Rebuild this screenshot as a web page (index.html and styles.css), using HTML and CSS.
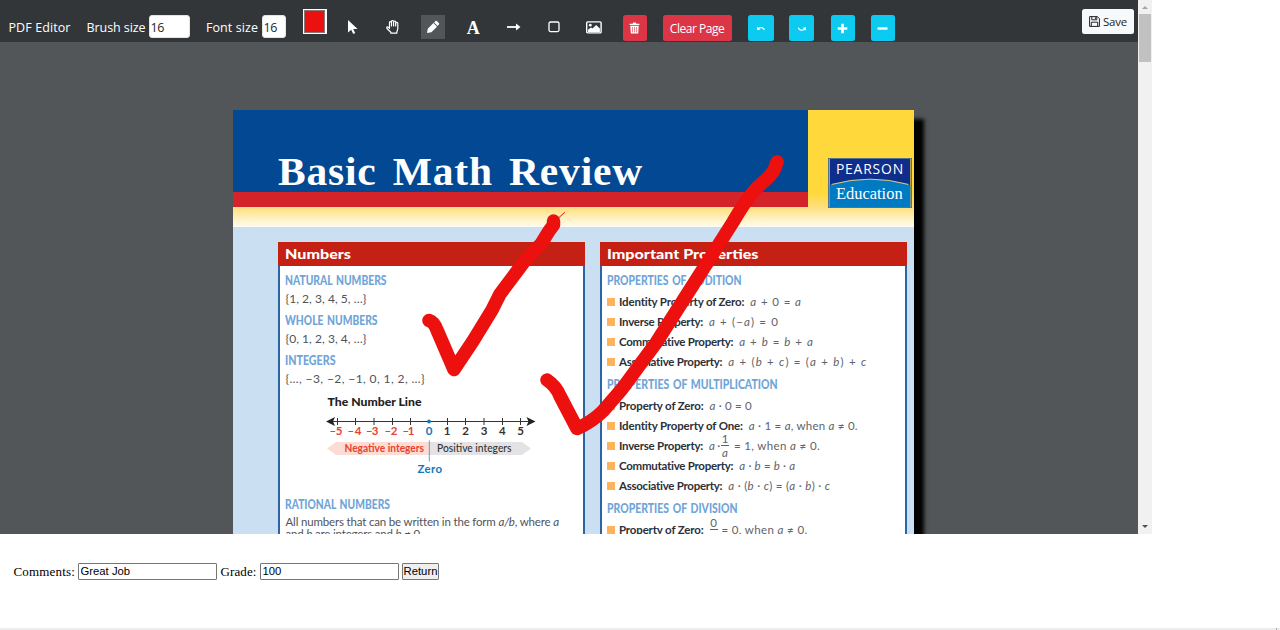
FILE: index.html
```html
<!DOCTYPE html>
<html lang="en">
<head>
<meta charset="utf-8">
<title>PDF Editor</title>
<link rel="stylesheet" href="styles.css">
</head>
<body>
<div class="editor">
  <div class="editor-main">
    <header class="toolbar">
      <span class="brand" data-w="62">PDF Editor</span>
      <label class="brush-label" data-w="59">Brush size</label><span class="num num-brush">16</span>
      <label class="font-label" data-w="52">Font size</label><span class="num num-font">16</span>
      <span class="swatch"></span>
      <div class="tools">
        <span class="tool"><svg width="12" height="16" viewBox="0 0 12 16"><path d="M1 1v12.500l3.200-2.800 2 4.300 2-.9-2-4.200H10.600z" fill="#fff"/></svg></span>
        <span class="tool"><svg width="16" height="16" viewBox="0 0 16 16" fill="none" stroke="#fff" stroke-width="1.2" stroke-linejoin="round" stroke-linecap="round"><path d="M4.500 9V3.500c0-1.200 2-1.200 2 0V7M6.500 7V2.400c0-1.200 2.100-1.200 2.100 0V7M8.600 7V2.900c0-1.200 2.100-1.200 2.100 0V7M10.700 7V4.300c0-1.200 2.100-1.200 2.100 0V9c0 2-.5 2.800-1 4v1.200H5.800v-1L2 9.500c-.9-1.200.5-2.200 1.500-1.200l1 1"/></svg></span>
        <span class="tool active"><svg width="14" height="14" viewBox="0 0 14 14"><path d="M1 13l.8-4.300 5.600-5.600 3.600 3.600-5.600 5.500zM8.100 2.400l1.400-1.300q.7-.6 1.400 0l2 2q.6.7 0 1.400l-1.300 1.400z" fill="#fff"/></svg></span>
        <span class="tool letter">A</span>
        <span class="tool"><svg width="16" height="10" viewBox="0 0 16 10"><path d="M1 5h10" stroke="#fff" stroke-width="1.800"/><path d="M10 1.500L14.500 5 10 8.500z" fill="#fff"/></svg></span>
        <span class="tool"><svg width="12" height="12" viewBox="0 0 12 12"><rect x="1" y="1" width="10" height="9.600" rx="1.500" fill="none" stroke="#fff" stroke-width="1.300"/></svg></span>
        <span class="tool"><svg width="16" height="13" viewBox="0 0 16 13"><rect x=".7" y=".9" width="14.400" height="11" rx="1" fill="none" stroke="#fff" stroke-width="1.400"/><circle cx="4.300" cy="4.200" r="1.400" fill="#fff"/><path d="M2 11V8.800L5 6.500l1.500 1L10.100 3.900l3.800 3.600V11z" fill="#fff"/></svg></span>
      </div>
      <span class="btn danger trash"><svg width="11" height="12" viewBox="0 0 11 12"><path d="M.6 1.800h3L4.300.6h2.400l.7 1.200h3v1.300H.6zM1.300 3.800h8.400l-.5 7.700H1.800z" fill="#fff"/><path d="M3.500 5v5.300M5.500 5v5.300M7.500 5v5.300" stroke="#dc3545" stroke-width=".6"/></svg></span>
      <span class="btn danger clear"><span data-w="54.500">Clear Page</span></span>
      <span class="btn info undo"><svg width="10" height="8" viewBox="0 0 10 8"><path d="M2 4.600C4 3 7.500 3 8.500 6" fill="none" stroke="#fff" stroke-width="1.200"/><path d="M.8 2.800l.5 3.500 3.100-.7z" fill="#fff"/></svg></span>
      <span class="btn info redo"><svg width="10" height="8" viewBox="0 0 10 8"><path d="M1.300 3.700C2 6.700 5.500 6.700 7.800 5.200" fill="none" stroke="#fff" stroke-width="1.200"/><path d="M9 6.500l-.3-3.500-3.100.9z" fill="#fff"/></svg></span>
      <span class="btn info plus"><svg width="11" height="11" viewBox="0 0 11 11"><path d="M5.500.7v9.600M.7 5.500h9.600" stroke="#fff" stroke-width="2.700"/></svg></span>
      <span class="btn info minus"><svg width="11" height="11" viewBox="0 0 11 11"><path d="M.5 5.500h10" stroke="#fff" stroke-width="2.400"/></svg></span>
      <span class="save"><svg width="11" height="11" viewBox="0 0 11 11" fill="none" stroke="#212529" stroke-width="1"><path d="M.6.6h7.800l2 2v7.800H.6zM2.800.6v3.200h5V.6M2.300 10.400V6.200h6.400v4.200"/><path d="M6.400 1.300v1.700"/></svg><span data-w="24">Save</span></span>
    </header>
    <main class="viewer">
      <div class="page">
        <div class="banner">
          <div class="banner-title"><h1><span class="wide" data-w="365">Basic Math Review</span></h1></div>
          <div class="banner-side">
            <svg class="logo" width="84" height="50" viewBox="0 0 84 50">
              <rect width="84" height="50" fill="#0f2d8a"/>
              <path d="M0 27Q42 15 84 27V50H0z" fill="#007ac3"/>
              <path d="M2 26.500Q42 15.500 82 26.500" fill="none" stroke="#e8d67a"/>
              <text class="logo-top" x="6.500" y="15.500" textLength="70">PEARSON</text>
              <text class="logo-bottom" x="6.500" y="42" textLength="69.500" lengthAdjust="spacingAndGlyphs">Education</text>
            </svg>
          </div>
        </div>
        <div class="columns">
          <section class="panel">
            <h2><span class="wide" data-w="66">Numbers</span></h2>
            <h3><span class="wide" data-w="101.500">NATURAL NUMBERS</span></h3>
            <p class="set"><span data-w="81">{1, 2, 3, 4, 5, …}</span></p>
            <h3><span class="wide" data-w="92.500">WHOLE NUMBERS</span></h3>
            <p class="set"><span data-w="81">{0, 1, 2, 3, 4, …}</span></p>
            <h3><span class="wide" data-w="50.500">INTEGERS</span></h3>
            <p class="set"><span data-w="139.500">{…, −3, −2, −1, 0, 1, 2, …}</span></p>
            <svg class="number-line" width="300" height="104" viewBox="280 392 300 104">
              <text x="327.500" y="405.800" class="nl-title" textLength="94" lengthAdjust="spacingAndGlyphs">The Number Line</text>
              <path d="M333 421.500H529" stroke="#333" stroke-width="1"/>
              <path d="M326 421.500l9-4.500-2 4.500 2 4.500zM535.500 421.500l-9-4.500 2 4.500-2 4.500z" fill="#222"/>
              <path d="M337.500 418v7M355.500 418v7M374 418v7M392.500 418v7M410.500 418v7M447.500 418v7M465.500 418v7M484 418v7M502.500 418v7M520.500 418v7" stroke="#333"/>
              <circle cx="429" cy="421.500" r="1.900" fill="#1477bd"/>
              <path d="M327 448.500l9-6.500H429v13H336z" fill="#fddcd3"/>
              <path d="M531 448.500l-9-6.500H429v13H522z" fill="#e3e3e6"/>
              <path d="M429.300 440.500v21" stroke="#5b9fd0"/>
              <g class="nl-neg"><text x="329.500" y="435.300" textLength="13">–5</text><text x="347.500" y="435.300" textLength="14">–4</text><text x="366" y="435.300" textLength="12.500">–3</text><text x="384.500" y="435.300" textLength="13">–2</text><text x="402.500" y="435.300" textLength="12">–1</text></g>
              <g class="nl-pos"><text x="429" y="435.300" class="nl-zero">0</text><text x="447" y="435.300">1</text><text x="465.500" y="435.300">2</text><text x="484" y="435.300">3</text><text x="502.300" y="435.300">4</text><text x="520.500" y="435.300">5</text></g>
              <text x="344.500" y="452" class="nl-left" textLength="79.500" lengthAdjust="spacingAndGlyphs">Negative integers</text>
              <text x="437" y="452" class="nl-right" textLength="74.500" lengthAdjust="spacingAndGlyphs">Positive integers</text>
              <text x="417.500" y="473.300" class="nl-bottom" textLength="24.500">Zero</text>
            </svg>
            <h3><span class="wide" data-w="105">RATIONAL NUMBERS</span></h3>
            <p class="prose"><span data-w="273">All numbers that can be written in the form <i>a/b</i>, where <i>a</i></span></p>
            <p class="prose"><span data-w="137">and <i>b</i> are integers and <i>b</i> ≠ 0.</span></p>
          </section>
          <section class="panel">
            <h2><span class="wide" data-w="151.500">Important Properties</span></h2>
            <h3><span class="wide" data-w="134.500">PROPERTIES OF ADDITION</span></h3>
            <ul>
              <li><b data-w="125.500">Identity Property of Zero:</b><span data-w="51.500"><i>a</i> + 0 = <i>a</i></span></li>
              <li><b data-w="84">Inverse Property:</b><span data-w="70"><i>a</i> + (−<i>a</i>) = 0</span></li>
              <li><b data-w="114.500">Commutative Property:</b><span data-w="74.500"><i>a</i> + <i>b</i> = <i>b</i> + <i>a</i></span></li>
              <li><b data-w="103.500">Associative Property:</b><span data-w="139"><i>a</i> + (<i>b</i> + <i>c</i>) = (<i>a</i> + <i>b</i>) + <i>c</i></span></li>
            </ul>
            <h3><span class="wide" data-w="170.500">PROPERTIES OF MULTIPLICATION</span></h3>
            <ul>
              <li><b data-w="84.500">Property of Zero:</b><span data-w="42.500"><i>a</i> · 0 = 0</span></li>
              <li><b data-w="124">Identity Property of One:</b><span data-w="109"><i>a</i> · 1 = <i>a</i>, when <i>a</i> ≠ 0.</span></li>
              <li><b data-w="84">Inverse Property:</b><span data-w="11"><i>a</i> ·</span><span class="frac"><span>1</span><i>a</i></span><span data-w="86">= 1, when <i>a</i> ≠ 0.</span></li>
              <li><b data-w="114.500">Commutative Property:</b><span data-w="56"><i>a</i> · <i>b</i> = <i>b</i> · <i>a</i></span></li>
              <li><b data-w="103.500">Associative Property:</b><span data-w="102"><i>a</i> · (<i>b</i> · <i>c</i>) = (<i>a</i> · <i>b</i>) · <i>c</i></span></li>
            </ul>
            <h3><span class="wide" data-w="130.500">PROPERTIES OF DIVISION</span></h3>
            <ul>
              <li><b data-w="84.500">Property of Zero:</b><span class="frac first"><span>0</span><i>a</i></span><span data-w="86">= 0, when <i>a</i> ≠ 0.</span></li>
            </ul>
          </section>
        </div>
        <svg class="ink" width="681" height="424" viewBox="233 110 681 424">
          <path d="M429 320.500Q434 322 437 330L454 369.500 473 341 492 310 500 294 527 258 541 244 549 231 553.500 225V221"/>
          <path d="M547 380Q556 386 560 396L577 428.500Q592 422 603 411L622 389 656 343 707 263 733 222Q750 193 761 184T775 168L777 162"/>
          <path class="hair" d="M553 223L564.500 212.500"/>
        </svg>
      </div>
    </main>
  </div>
  <div class="scrollbar"><span class="up"></span><span class="thumb"></span><span class="down"></span></div>
</div>
<form class="grading">
  <label data-w="61.500">Comments:</label><input type="text" value="Great Job">
  <label class="grade" data-w="36">Grade:</label><input type="text" value="100">
  <button type="button">Return</button>
</form>
<div class="bottom-edge"><span></span></div>
<script src="fit.js"></script>
</body>
</html>
```

FILE: styles.css
```css
* { box-sizing: border-box; }
body { margin: 0; height: 630px; overflow: hidden; background: #fff; display: flex; flex-direction: column; }
h1, h2, h3, p, ul { margin: 0; padding: 0; }
svg { display: block; flex: none; }
[data-w] { white-space: pre; }
.wide { display: inline-block; transform-origin: 0 50%; }

.editor { display: flex; width: 1152px; height: 534px; }
.editor-main { width: 1138px; display: flex; flex-direction: column; }

.toolbar { height: 42px; flex: none; background: #323639; color: #fff; display: flex; align-items: flex-start; padding-left: 8.500px; font: 12.500px/24px "Open Sans", "Noto Sans", sans-serif; }
.toolbar > * { flex: none; }
.brand, .brush-label, .font-label { margin-top: 16px; }
.brand { width: 78px; }
.brush-label { width: 62.500px; }
.font-label { width: 56px; margin-left: 16px; }
.num { margin-top: 15px; height: 23px; padding-left: .5px; border-radius: 3px; background: #fff; color: #212529; border: 1px solid #e4e4e4; line-height: 23px; letter-spacing: -.3px; }
.num-brush { width: 41px; }
.num-font { width: 24px; }
.swatch { width: 24px; height: 25px; margin: 9px 14.300px 0 16.500px; background: #ec1010; border: 1px solid #fff; border-right-width: 2px; box-shadow: inset 0 0 0 1px #8c7777; }
.tools { display: flex; gap: 16.200px; margin-top: 15px; }
.tool { width: 24px; height: 24px; display: flex; align-items: center; justify-content: center; }
.tool.active { background: #525659; }
.tool.letter { font: bold 18px/24px "Liberation Serif", serif; padding-top: 1px; }
.btn { height: 26px; margin-top: 15px; border-radius: 2.500px; display: flex; align-items: center; justify-content: center; font-size: 12px; line-height: 26px; }
.danger { background: #dc3545; }
.info { background: #0dcaf0; }
.trash { width: 24px; margin-left: 16.700px; }
.clear { width: 69px; margin-left: 16px; padding-top: 2px; }
.undo { width: 26px; margin-left: 16px; }
.redo { width: 25px; margin-left: 15.500px; }
.plus { width: 24px; margin-left: 16.500px; }
.minus { width: 24px; margin-left: 16px; }
.save { width: 52px; height: 25px; margin: 9px 4px 0 auto; background: #f8f9fa; color: #212529; border-radius: 2.500px; display: flex; align-items: center; gap: 3px; padding-left: 7px; font-size: 11.500px; line-height: 25px; }

.viewer { flex: 1; min-height: 0; overflow: hidden; background: #525659; padding: 68px 0 0 233px; }
.page { position: relative; width: 681px; height: 700px; background: #cae0f2; box-shadow: 10px 9px 4px #000; font-family: Lato, sans-serif; }
.banner { display: flex; height: 117px; background: linear-gradient(#ffd93b 0 83px, #fee082 98px, #fffdf2 117px); }
.banner-title { width: 575px; height: 97px; background: #034892; border-bottom: 15px solid #d42429; }
h1 { font: bold 41px/46px "Liberation Serif", serif; color: #fff; padding: 38px 0 0 45px; letter-spacing: .8px; word-spacing: 5px; }
.banner-side { padding: 48px 0 0 20px; }
.logo { border: .5px solid #55718c; }
.logo-top { font: 14.500px "Open Sans", sans-serif; fill: #fff; }
.logo-bottom { font: 17px "Liberation Serif", serif; fill: #fff; }

.columns { display: flex; gap: 15px; padding: 15px 0 0 45px; }
.panel { width: 307px; height: 540px; background: #fff; border: 2px solid #2d65a4; border-top: 0; }
h2 { height: 23.500px; margin: 0 -2px 6.500px; padding-left: 6.800px; background: #c42013; color: #fff; font: 900 14px/23px Lato, sans-serif; }
h3 { height: 18px; padding-left: 4.800px; color: #6fa5d8; font: 900 12.800px/17px Lato, sans-serif; word-spacing: 1.500px; }
.set { height: 18px; margin-bottom: 4px; padding-left: 5.500px; font-size: 12px; line-height: 18px; color: #50535a; }
.prose { height: 12px; padding-left: 5.500px; font-size: 11.500px; line-height: 12px; color: #50535a; }
h3 + .prose { margin-top: 2px; }
.nl-title { font-weight: 900; font-size: 11.500px; fill: #222; }
.nl-neg, .nl-left { fill: #e8412f; font-weight: 700; font-size: 11.500px; }
.nl-pos { fill: #333; font-weight: 700; font-size: 11.500px; text-anchor: middle; }
.nl-zero, .nl-bottom { fill: #1477bd; font-weight: 700; font-size: 11.500px; }
.nl-left, .nl-right { font-size: 11px; }
.nl-right { fill: #333; font-weight: 500; }

ul { list-style: none; margin: 2px 0 4px; }
li { height: 20px; display: flex; align-items: center; padding-left: 5px; font-size: 11.500px; line-height: 20px; color: #60636a; }
li::before { content: ""; width: 8px; height: 8px; margin-right: 4px; background: #fdb35c; flex: none; }
li b { margin-right: 6px; color: #2d3038; }
.frac { width: 8px; height: 28px; margin: 0 5px 0 1px; flex: none; display: flex; flex-direction: column; text-align: center; line-height: 14px; }
.frac > span { height: 14px; line-height: 13px; border-bottom: 1px solid #60636a; }
.frac.first { margin: 0 4px 0 0; }

.ink { position: absolute; left: 0; top: 0; fill: none; stroke: #ec100e; stroke-width: 13.500; stroke-linecap: round; stroke-linejoin: round; }
.ink .hair { stroke-width: 1; }

.scrollbar { width: 14px; background: #f1f1f1; display: flex; flex-direction: column; align-items: center; }
.up { border: 3px solid transparent; border-top: 0; border-bottom: 3px solid #a3a3a3; margin: 6px 0 5px; }
.thumb { width: 12px; height: 48px; background: #c1c1c1; }
.down { border: 3px solid transparent; border-bottom: 0; border-top: 3px solid #505050; margin: auto 0 6px; }

.grading { height: 93.500px; padding: 28.500px 0 0 13.500px; display: flex; align-items: flex-start; font: 13px/17px "Liberation Serif", serif; color: #000; }
.grading label { width: 64.500px; flex: none; }
.grading .grade { width: 39.500px; margin-left: 3.500px; }
.grading input { width: 139px; height: 17px; padding: 0 1.500px; border: 1px solid #767676; border-radius: 1px; font: 11.300px "Liberation Sans", sans-serif; }
.grading button { width: 37px; height: 17px; margin-left: 3px; padding: 0; border: 1px solid #767676; border-radius: 1px; background: #efefef; font: 11.300px "Liberation Sans", sans-serif; }
.bottom-edge { height: 2.500px; background: #ededed; display: flex; justify-content: flex-end; padding-right: 3px; }
.bottom-edge span { width: 1px; background: #aaa; }
```

FILE: fit.js
```js
// Sets each run of text to its typeset width (data-w, in px):
// display faces are stretched, running text is tracked.
document.querySelectorAll('[data-w]').forEach(function (el) {
  var range = document.createRange();
  range.selectNodeContents(el);
  var natural = range.getBoundingClientRect().width;
  var target = parseFloat(el.dataset.w);
  if (el.classList.contains('wide')) {
    el.style.transform = 'scaleX(' + target / natural + ')';
  } else {
    el.style.letterSpacing = (target - natural) / el.textContent.length + 'px';
  }
});
```
